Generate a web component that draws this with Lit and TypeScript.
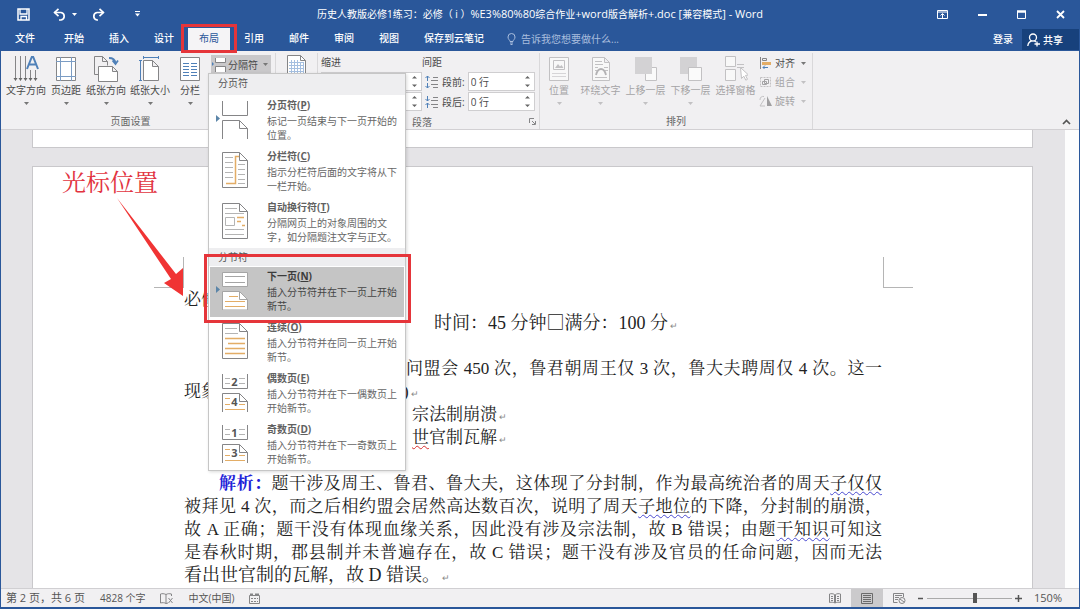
import { LitElement, html, css, svg, nothing, type TemplateResult } from "lit";
import { customElement } from "lit/decorators.js";
import { classMap } from "lit/directives/class-map.js";

const icon = (w: number, h: number, body: TemplateResult, cls = "") =>
  html`<svg class=${cls} width=${w} height=${h} viewBox="0 0 ${w} ${h}" fill="none" aria-hidden="true">${body}</svg>`;

const G = "#858587";
const L = "#c2c1c3";
const B = "#4f80b8";
const O = "#e3ad66";

const caret = (color = "#777") => icon(5, 3, svg`<path d="M0 0h5L2.5 3z" fill=${color}/>`, "caret");

const icons = {
  save: icon(13, 13, svg`<path d="M1 1h11v11H1z" stroke="#fff" stroke-width="1.5"/><path d="M3 1v5h7V1M4 12V8.500h5.500V12" stroke="#fff" stroke-width="1.300"/>`),
  undo: icon(13, 13, svg`<path d="M1.500 4.500h6.500a3.800 3.800 0 0 1 0 7.500H6" stroke="#fff" stroke-width="1.700"/><path d="M5.500 .8 1.600 4.500l3.900 3.700" stroke="#fff" stroke-width="1.700"/>`),
  redo: icon(13, 13, svg`<path d="M11.500 4.500H5a3.800 3.800 0 0 0 0 7.500h1" stroke="#fff" stroke-width="1.700"/><path d="m7.500 .8 3.900 3.700-3.900 3.700" stroke="#fff" stroke-width="1.700"/>`),
  custom: icon(5, 6, svg`<path d="M0 .5h5" stroke="#fff"/><path d="M0 2.500h5L2.500 5.500z" fill="#fff"/>`),
  display: icon(11, 9, svg`<path d="M.5 .5h10v8H.5zM.5 2h10" stroke="#fff"/><path d="M5.500 8V4M3.500 5.500l2-2 2 2" stroke="#fff"/>`),
  min: icon(9, 9, svg`<path d="M0 5h9" stroke="#fff" stroke-width="2"/>`),
  max: icon(9, 9, svg`<path d="M.5 1.500h8v7h-8z" stroke="#fff"/><path d="M0 1.500h9" stroke="#fff" stroke-width="2.500"/>`),
  close: icon(9, 9, svg`<path d="m1 1 7 7M8 1 1 8" stroke="#fff" stroke-width="1.800"/>`),
  bulb: icon(9, 12, svg`<path d="M3 8.500C3 7 1 6.500 1 4a3.500 3.500 0 0 1 7 0c0 2.500-2 3-2 4.500zM3 10h3M3.500 11.500h2" stroke="#a9bede"/>`),
  person: icon(13, 14, svg`<circle cx="6" cy="4.500" r="3.500" stroke="#fff" stroke-width="1.300"/><path d="M.8 13c.3-3 2-4.500 3.800-5M7.500 8l1.500 1M10 8.500v5M7.500 11H13" stroke="#fff" stroke-width="1.300"/>`),
  direction: icon(28, 28, svg`<path d="M3.500 1v23M8.500 1v23M13.500 1v23M18.500 15v9M23.500 15v9" stroke=${G}/><path d="M1.500 23h4l-2 3zM6.500 23h4l-2 3zM11.500 23h4l-2 3zM16.500 23h4l-2 3zM21.500 23h4l-2 3z" fill="#666"/><path d="m15 14 4.800-12h1.400L26 14M16.800 9.500h7.400" stroke=${B} stroke-width="2"/>`),
  margins: icon(20, 26, svg`<path d="M.5 1.500h19v23H.5z" stroke=${G} fill="#fff"/><path d="M4.500 1v24M15.500 1v24M0 5.500h20M0 20.500h20" stroke="#7b9cc4"/>`),
  orient: icon(26, 26, svg`<path d="M1.500 18.500V.5h8l5 5v4M9.500 .5v5h5M1.500 18.500h4" stroke=${G}/><path d="M5.500 25.500v-15h14l5 5v10zM19.500 10.500v5h5" stroke=${G} fill="#fff"/><path d="M16 2c4 0 6 1.500 6.500 5M19.500 4.500l3 3.500 2.500-3.500" stroke=${B} stroke-width="1.800"/>`),
  size: icon(22, 26, svg`<path d="M4.500 24.500v-20h9l6 6v14zM13.500 4.500v6h6" stroke=${G} fill="#fff"/><path d="M4 1.500h16M4.500 0v3M19.500 0v3M1.500 4v21M0 4.500h3M0 24.500h3" stroke=${B}/>`),
  columns: icon(20, 26, svg`<path d="M.5 1.500h19v23H.5z" stroke=${G} fill="#fff"/><path d="M3 7.500h6M3 10.500h6M3 13.500h6M3 16.500h6M3 19.500h6M11 7.500h6M11 10.500h6M11 13.500h6M11 16.500h6M11 19.500h6" stroke=${B}/>`),
  breaks: icon(14, 14, svg`<path d="M3.500 0v4.500h10V0M3.500 14V8.500h10V14" stroke=${G} fill="#fff"/><path d="M0 4v4l2-2z" fill=${B}/>`),
  grid: icon(20, 24, svg`<path d="M.5 .5h13l5 5V24H.5z" stroke=${G} fill="#fff"/><path d="M13.500 .5v5h5" stroke=${G}/><path d="M2 7.500h15M2 10.500h15M2 13.500h15M2 16.500h15M2 19.500h15M4.500 5v18M7.500 5v18M10.500 5v18M13.500 7v16M16.500 7v16" stroke="#a5bfe0"/>`),
  before: icon(14, 14, svg`<path d="M2.500 1v5M.5 3l2-2 2 2M2.500 8v5M.5 11l2 2 2-2" stroke=${B}/><path d="M8 2.500h5M6 5.500h7M6 9.500h7M8 12.500h5" stroke=${G}/>`),
  after: icon(14, 14, svg`<path d="M2.500 1v5M.5 4l2 2 2-2M2.500 8v5M.5 10l2-2 2 2" stroke=${B}/><path d="M8 2.500h5M6 5.500h7M6 9.500h7M8 12.500h5" stroke=${G}/>`),
  position: icon(20, 26, svg`<path d="M.5 1.500h19v23H.5z" stroke=${L} fill="#f8f8f8"/><path d="M4.500 4.500h11v9h-11z" stroke=${L}/><path d="m6 12 3-4 2 2.500 1.500-1.500 2 3z" fill=${L}/><path d="M3 17.500h14M3 20.500h14" stroke="#d6d5d7"/>`),
  wrap: icon(20, 26, svg`<path d="M1.500 1.500h12l5 5v18h-17zM13.500 1.500v5h5" stroke=${L} fill="#f8f8f8"/><path d="M4 5.500h7M4 8.500h8M4 11.500h3M13 11.500h4M4 14.500h2M14 14.500h3M4 21.500h12" stroke=${L}/><path d="M5 19c1-4 3-6 5-6s4 2 5 6" stroke="#b3b2b4" stroke-width="1.800"/>`),
  forward: icon(22, 26, svg`<path d="M10.500 11.500h11v13h-11z" stroke=${L} fill="#fafafa"/><path d="M0 1h17v17H0z" fill="#d3d2d4"/>`),
  backward: icon(22, 26, svg`<path d="M0 1h17v17H0z" fill="#d3d2d4"/><path d="M8.500 11.500h13v13h-13z" stroke=${L} fill="#fafafa"/>`),
  select: icon(24, 26, svg`<path d="M1.500 .5h10v10h-10zM1.500 13.500h10v11h-10z" stroke=${L} fill="#f8f8f8"/><path d="M13 8.500h7M13 11.500h7" stroke=${L}/><path d="m16.500 11.500 1 11 2.300-2.300 2 4 1.700-.9-2-3.900 3-.4z" stroke=${L} fill="#fff"/>`),
  align: icon(13, 12, svg`<path d="M1.500 0v12" stroke=${G}/><path d="M3.500 1.500h4v2h-4z" stroke=${G}/><path d="M3 5h9v3H3z" fill=${O}/><path d="M9 10.500H4M6 8.500l-2 2 2 2" stroke=${B}/>`),
  group: icon(13, 12, svg`<path d="M1.500 1.500h10v9h-10z" stroke=${L} stroke-dasharray="2 1"/><path d="M3.500 5.500h4v3h-4zM5.500 3.500h4v4h-4z" stroke="#a3a2a4"/>`),
  rotate: icon(13, 12, svg`<path d="M8 1v10h5z" fill="#9f9ea0"/><path d="M6 11H1l5-8" stroke=${L}/><path d="M1 5c0-3 2-4 4-3.500" stroke=${L}/>`),
  launcher: icon(7, 7, svg`<path d="M.5 5V.5H5M3 3l3 3M6.500 3v3.500H3" stroke=${G}/>`),
  up: icon(9, 6, svg`<path d="m1 5 3.500-3.500L8 5" stroke="#555" stroke-width="1.700"/>`),
  proof: icon(13, 11, svg`<path d="M6 1.500C4 .5 2 .5.5 1v9c2-.5 4-.5 5.500.5zM6 1.500C8 .5 9 .5 11.500 1v2M6 10.500l2-.5M8.500 5l4 5M12.500 5l-4 5" stroke=${G}/>`),
  macro: icon(12, 11, svg`<path d="M.5 2.500h10v8H.5z" stroke=${G}/><path d="M1 1.500h3M6 1.500h4" stroke=${G} stroke-width="2"/><path d="M2 5.500h7M2 8.500h7" stroke=${G} stroke-dasharray="2 1"/>`),
  read: icon(12, 11, svg`<path d="M5.500 1.500C4 .5 2 .5.500 1v8.500c2-.5 3.500-.5 5 .5zM6.500 1.500c1.500-1 3.500-1 5-.5v8.500c-2-.5-3.500-.5-5 .5zM2 3.500h2M2 5.500h2M2 7.500h2M8 3.500h2M8 5.500h2M8 7.500h2" stroke=${G}/>`),
  print: icon(12, 11, svg`<path d="M.5 .5h11v10H.5zM2 2.500h8M2 4.500h8M2 6.500h8M2 8.500h8" stroke="#6b6b6b"/>`),
  web: icon(13, 11, svg`<path d="M10.500 4V.5H.5v9h4M2 2.500h7M2 4.500h4M2 6.500h3" stroke=${G}/><circle cx="9" cy="7.500" r="3" stroke=${G}/><path d="m7 6 4 3" stroke=${G}/>`),
};

const halves = (num: string | null, low: string | null) => svg`
  <path d="M.5 0v14.500h25V0M.5 38V19.500h17l8 8V38M17.500 19.500v8h8" stroke=${G} fill="#fff"/>
  ${num
    ? svg`<path d="M3 4.500h20M3 9.500h20" stroke="#b4b4b4"/><path d="M3 24.500h12M3 30.500h20M3 35.500h20" stroke=${O}/><path d="M8 2h9v11H8zM8 22h9v11H8z" fill="#fff"/>
      <text x="12.500" y="12" class="num">${num}</text><text x="12.500" y="32" class="num">${low}</text>`
    : nothing}`;
const sheet = svg`<path d="M.5 .5h17l8 8v27H.5zM17.500 .5v8h8" stroke=${G} fill="#fff"/>`;

const glyphs = {
  page: icon(26, 38, halves(null, null)),
  column: icon(26, 38, svg`${sheet}<path d="M3 5.500h8M3 10.500h8M3 15.500h8M3 20.500h8M3 25.500h8M16 12.500h7M16 17.500h7M16 22.500h7M16 27.500h7M16 31.500h7" stroke="#b4b4b4"/><path d="M4 31.500h9.500V4.500H17" stroke=${O} stroke-width="1.500"/>`),
  wrap: icon(26, 38, svg`${sheet}<path d="M3 5.500h12M3 10.500h19M3 26.500h19M3 31.500h19" stroke="#b4b4b4"/><path d="M3.500 14.500h9v8h-9z" stroke="#b4b4b4"/><path d="M15 14.500h7M15 18.500h4M20 22.500h3" stroke=${O} stroke-width="1.500"/>`),
  next: icon(26, 38, svg`<path d="M.5 .5h25v14H.5zM.5 38V19.500h17l8 8V38z" stroke="#a5a5a5" fill="#fff"/><path d="M17.500 19.500v8h8M3 4.500h20M3 10.500h20" stroke="#a5a5a5"/><path d="M7 24.500h9M3 29.500h20M3 34.500h20" stroke=${O}/>`),
  cont: icon(26, 38, svg`${sheet}<path d="M3 5.500h12M3 10.500h13" stroke="#b4b4b4"/><path d="M3 15.500h20M6 20.500h17M3 25.500h20M3 30.500h20" stroke=${O} stroke-width="1.300"/>`),
  even: icon(26, 38, halves("2", "4")),
  odd: icon(26, 38, halves("1", "3")),
};

interface BreakItem { name: string; key: string; text: string; glyph: TemplateResult; mark?: boolean; hot?: boolean }
const pageBreaks: BreakItem[] = [
  { name: "分页符", key: "P", text: "标记一页结束与下一页开始的位置。", glyph: glyphs.page, mark: true },
  { name: "分栏符", key: "C", text: "指示分栏符后面的文字将从下一栏开始。", glyph: glyphs.column },
  { name: "自动换行符", key: "T", text: "分隔网页上的对象周围的文字，如分隔题注文字与正文。", glyph: glyphs.wrap },
];
const sectionBreaks: BreakItem[] = [
  { name: "下一页", key: "N", text: "插入分节符并在下一页上开始新节。", glyph: glyphs.next, mark: true, hot: true },
  { name: "连续", key: "O", text: "插入分节符并在同一页上开始新节。", glyph: glyphs.cont },
  { name: "偶数页", key: "E", text: "插入分节符并在下一偶数页上开始新节。", glyph: glyphs.even },
  { name: "奇数页", key: "D", text: "插入分节符并在下一奇数页上开始新节。", glyph: glyphs.odd },
];

const base = css`
  * { box-sizing: border-box; }
  button { font: inherit; color: inherit; background: none; border: 0; margin: 0; padding: 0; }
  svg { display: block; flex: none; }
`;

@customElement("break-menu")
class BreakMenu extends LitElement {
  static styles = [base, css`
    :host { display: block; background: #fff; border: 1px solid #c6c6c6; box-shadow: 1px 1px 3px rgba(0, 0, 0, .15); color: #666; white-space: normal; }
    .head { height: 21px; line-height: 19px; padding-left: 9px; background: #eeeef0; color: #555; }
    .head.second { height: 18px; line-height: 18px; }
    .item { position: relative; display: flex; width: 100%; height: 51px; padding: 1px 3px 0 13px; text-align: left; align-items: flex-start; }
    .item.hot { background: #c5c5c5; background-clip: content-box; padding: 1px 1px 0; color: #444; }
    .item.hot .glyph { margin-left: 12px; }
    .glyph { width: 45px; padding-top: 5px; flex: none; }
    .name { display: block; line-height: 18px; font-weight: 700; color: #606060; }
    .hot .name { color: #3c3c3c; }
    .desc { display: block; line-height: 14px; width: 134px; }
    .mark { position: absolute; left: 7px; top: 20px; }
    .num { font: 700 11px "Open Sans", sans-serif; fill: #555; text-anchor: middle; }
    .frame { position: absolute; inset: -12px -6px -6px -5px; border: 3px solid #e5353a; z-index: 2; pointer-events: none; }
  `];
  private row(i: BreakItem) {
    return html`<button class=${classMap({ item: true, hot: !!i.hot })} role="menuitem">
      ${i.mark ? icon(4, 7, svg`<path d="M0 0v7l4-3.500z" fill="#5b85a8"/>`, "mark") : nothing}
      <span class="glyph">${i.glyph}</span>
      <span class="text"><span class="name">${i.name}(<u>${i.key}</u>)</span><span class="desc">${i.text}</span></span>
      ${i.hot ? html`<span class="frame"></span>` : nothing}
    </button>`;
  }
  render() {
    return html`<div role="menu">
      <div class="head">分页符</div>${pageBreaks.map((i) => this.row(i))}
      <div class="head second">分节符</div>${sectionBreaks.map((i) => this.row(i))}
    </div>`;
  }
}

@customElement("word-ribbon")
class WordRibbon extends LitElement {
  static styles = [base, css`
    :host { display: flex; height: 79px; background: #f1f0f2; border-bottom: 1px solid #d2d0d3; color: #4a4a4a; line-height: 14px; position: relative; z-index: 3; white-space: nowrap; }
    .group { display: flex; flex-direction: column; border-right: 1px solid #d9d8da; padding-top: 2px; margin-top: 2px; }
    .setup { width: 275px; padding-left: 3px; }
    .draft { width: 42px; align-items: center; }
    .para { width: 222px; padding-left: 3px; }
    .arrange { width: 273px; }
    .row { display: flex; flex: 1; }
    .name { line-height: 14px; height: 15px; text-align: center; color: #666; }
    .setup .name { padding-right: 18px; }
    .para .name { display: flex; justify-content: space-between; align-items: center; padding: 0 3px 0 91px; }
    .big { display: flex; flex-direction: column; align-items: center; width: 44px; height: 54px; }
    .big .label { margin-top: 1px; }
    .big .art { height: 27px; display: flex; align-items: center; }
    .big .caret { margin-top: 5px; }
    .big.narrow { width: 36px; }
    .arrange .big { width: 45px; }
    .arrange .narrow { width: 38px; }
    .off { color: #a5a4a6; }
    .anchor { position: relative; margin-left: 3px; height: 20px; }
    .breaks { display: flex; align-items: center; gap: 2px; width: 60px; height: 19px; background: #c9c8ca; padding-left: 1px; }
    .breaks .caret, .small .caret { margin-left: 3px; }
    break-menu { position: absolute; left: -3px; top: 18px; width: 198px; }
    .fields { display: grid; grid-template-columns: 101px 116px; row-gap: 1px; align-content: start; }
    .title { line-height: 15px; height: 16px; }
    .field { display: flex; align-items: center; height: 19px; gap: 3px; }
    .labelled { padding: 0 3px; }
    .box { display: flex; flex: 1; align-items: center; background: #fff; border: 1px solid #cfced0; height: 19px; min-width: 0; padding-right: 4px; }
    .box input { font: inherit; color: inherit; border: 0; background: none; outline: 0; padding: 0 0 0 2px; width: 0; flex: 1; min-width: 0; }
    .side { display: flex; flex-direction: column; gap: 5px; padding: 1px 0 0 1px; }
    .small { display: flex; align-items: center; height: 14px; gap: 3px; }
    .collapse { margin: auto 8px 4px auto; }
  `];
  private big(label: string, art: TemplateResult, opt: { off?: boolean; narrow?: boolean; flat?: boolean } = {}) {
    return html`<button class=${classMap({ big: true, off: !!opt.off, narrow: !!opt.narrow })}>
      <span class="art">${art}</span><span class="label">${label}</span>${opt.flat ? nothing : caret(opt.off ? L : "#777")}
    </button>`;
  }
  private spin() {
    return icon(5, 11, svg`<path d="M0 2.500h5L2.500 0zM0 8.500h5L2.500 11z" fill="#666"/>`);
  }
  render() {
    return html`
      <section class="group setup">
        <div class="row">
          ${this.big("文字方向", icons.direction)}${this.big("页边距", icons.margins, { narrow: true })}
          ${this.big("纸张方向", icons.orient)}${this.big("纸张大小", icons.size)}${this.big("分栏", icons.columns, { narrow: true })}
          <div class="anchor">
            <button class="breaks" aria-haspopup="menu" aria-expanded="true">${icons.breaks}分隔符${caret()}</button>
            <break-menu></break-menu>
          </div>
        </div>
        <div class="name">页面设置</div>
      </section>
      <section class="group draft">${icons.grid}</section>
      <section class="group para">
        <div class="row"><div class="fields">
          <span class="title">缩进</span><span class="title">间距</span>
          <div class="field"><span class="box"><input aria-label="左缩进">${this.spin()}</span></div>
          <div class="field labelled">${icons.before}<label for="before">段前:</label><span class="box"><input id="before" value="0 行">${this.spin()}</span></div>
          <div class="field"><span class="box"><input aria-label="右缩进">${this.spin()}</span></div>
          <div class="field labelled">${icons.after}<label for="after">段后:</label><span class="box"><input id="after" value="0 行">${this.spin()}</span></div>
        </div></div>
        <div class="name">段落<button aria-label="段落设置">${icons.launcher}</button></div>
      </section>
      <section class="group arrange">
        <div class="row">
          ${this.big("位置", icons.position, { off: true, narrow: true })}${this.big("环绕文字", icons.wrap, { off: true })}
          ${this.big("上移一层", icons.forward, { off: true })}${this.big("下移一层", icons.backward, { off: true })}
          ${this.big("选择窗格", icons.select, { off: true, flat: true })}
          <div class="side">
            <button class="small">${icons.align}对齐${caret()}</button>
            <button class="small off">${icons.group}组合${caret(L)}</button>
            <button class="small off">${icons.rotate}旋转${caret(L)}</button>
          </div>
        </div>
        <div class="name">排列</div>
      </section>
      <button class="collapse" aria-label="折叠功能区">${icons.up}</button>`;
  }
}

@customElement("word-document")
class WordDocument extends LitElement {
  static styles = [base, css`
    :host { display: flex; min-height: 0; overflow: hidden; background: #e5e4e7; }
    .canvas { flex: 1; min-width: 0; padding: 0 32px 0 31px; }
    .prev { height: 18px; background: #fff; border: 1px solid #c9c8cb; border-top: 0; }
    .page { position: relative; margin-top: 18px; height: 600px; background: #fff; border: 1px solid #c9c8cb; padding: 121px 150px 0 151px;
      font: 17px/23px "Liberation Serif", "Noto Serif CJK SC", "Noto Sans CJK SC", serif; color: #222; }
    .bar { width: 14px; background: #fdfdfd; }
    p { margin: 0; height: 23px; white-space: nowrap; }
    .full { text-align: justify; text-align-last: justify; white-space: normal; }
    .center { text-align: center; padding-left: 46px; }
    .large { font-size: 18px; }
    .square { font-family: "Noto Sans CJK SC", sans-serif; line-height: 20px; }
    .tail { padding-left: 222px; }
    .split { display: grid; grid-template-columns: 219px 1fr; }
    .option { padding-left: 228px; }
    .first { padding-left: 35px; }
    b { color: #2222d8; }
    i { font: 9px "Noto Sans CJK SC", sans-serif; color: #888; margin-left: 2px; }
    .g { text-decoration: underline wavy #4a4ad0 1px; text-underline-offset: 2px; }
    .r { text-decoration: underline wavy #d83030 1px; text-underline-offset: 2px; }
    .corner { position: absolute; top: 90px; width: 30px; height: 31px; border: 0 solid #b5b5b5; border-bottom-width: 1px; }
    .tl { left: 121px; border-right-width: 1px; }
    .tr { right: 119px; border-left-width: 1px; }
    .note { position: absolute; left: 29px; top: 1px; font-size: 24px; line-height: 30px; color: #e2343f; }
    .arrow { position: absolute; left: 83px; top: 30px; }
  `];
  render() {
    const ret = html`<i>↵</i>`;
    return html`
      <div class="canvas">
        <div class="prev"></div>
        <article class="page">
          <span class="corner tl"></span><span class="corner tr"></span>
          <p>必修</p>
          <p class="center large">时间：45 分钟<span class="square">□</span>满分：100 分${ret}</p>
          <p></p>
          <p class="full tail">问盟会 450 次，鲁君朝周王仅 3 次，鲁大夫聘周仅 4 次。这一</p>
          <p class="split"><span>现象</span><span>)${ret}</span></p>
          <p class="option">宗法制崩溃${ret}</p>
          <p class="option"><span class="r">世</span>官制瓦解${ret}</p>
          <p></p>
          <p class="full first"><b>解析：</b>题干涉及周王、鲁君、鲁大夫，这体现了分封制，作为最高统治者的周天<span class="g">子仅仅</span></p>
          <p class="full">被拜见 4 次，而之后相约盟会居然高达数百次，说明了周天<span class="g">子地位</span>的下降，分封制的崩溃，</p>
          <p class="full">故 A 正确；题干没有体现血缘关系，因此没有涉及宗法制，故 B 错误；由题<span class="g">干知识</span>可知这</p>
          <p class="full">是春秋时期，郡县制并未普遍存在，故 C 错误；题干没有涉及官员的任命问题，因而无法</p>
          <p class="large">看出世官制的瓦解，故 D 错误。${ret}</p>
          <span class="note">光标位置</span>
          ${icon(70, 102, svg`<path d="M1 1 60 77l7-6v28L48 86l7-4z" fill="#f03434"/>`, "arrow")}
        </article>
      </div>
      <div class="bar"></div>`;
  }
}

@customElement("app-root")
class AppRoot extends LitElement {
  static styles = [base, css`
    :host { display: flex; flex-direction: column; box-sizing: border-box; height: 100vh; overflow: hidden; border: 1px solid #2a579a; border-top: 0; border-bottom-width: 2px;
      font: 10px/14px "Open Sans", "Noto Sans CJK SC", sans-serif; background: #f1f0f2; }
    header { background: #2a579a; color: #fff; flex: none; }
    .title { display: grid; grid-template-columns: 1fr auto 1fr; align-items: center; height: 27px; padding-top: 1px; }
    .quick { display: flex; align-items: center; padding-left: 16px; }
    .quick button + button { margin-left: 23px; }
    .quick .more + button, .quick .more { margin-left: 6px; }
    .quick .more + button { margin-left: 15px; }
    .quick .last { margin-left: 30px; }
    .doc { white-space: nowrap; }
    .latin { font-size: 11px; }
    .window { display: flex; justify-content: flex-end; align-items: center; gap: 30px; padding-right: 14px; }
    nav { display: flex; align-items: stretch; height: 24px; padding-left: 3px; }
    .tab { position: relative; padding: 0 11px; margin-right: 3px; font-weight: 500; color: #fff; text-decoration: none; line-height: 23px; white-space: nowrap; }
    .tab.file { margin-right: 7px; }
    .tab.on { background: #f5f4f6; color: #2a579a; margin-top: 1px; line-height: 21px; font-weight: 400; }
    .frame { position: absolute; inset: -4px -7px -2px; border: 3px solid #e5353a; z-index: 5; pointer-events: none; }
    .tell { display: flex; align-items: center; gap: 5px; margin-left: 9px; color: #a9bede; }
    .tell input { font: inherit; background: none; border: 0; padding: 0; width: 150px; color: inherit; }
    .tell input::placeholder { color: #a9bede; opacity: 1; }
    .login { margin-left: auto; margin-right: 9px; font-weight: 500; }
    .share { display: flex; align-items: center; gap: 3px; width: 57px; padding-left: 5px; background: #17417c; font-weight: 500; margin: 2px 0 1px; }
    word-ribbon { flex: none; }
    word-document { flex: 1; }
    footer { display: flex; align-items: center; height: 19px; flex: none; padding: 0 17px 0 5px; border-top: 1px solid #d0cfd2; color: #555; white-space: nowrap; }
    .pages, .pct { font-size: 11px; }
    .gap { margin-left: 15px; }
    .views { display: flex; margin-left: auto; align-self: stretch; }
    .views button { width: 32px; display: flex; align-items: center; justify-content: center; }
    .views .on { background: #cbcacc; }
    .zoom { display: flex; align-items: center; gap: 3px; margin-left: 2px; }
    .zoom input { appearance: none; width: 85px; height: 10px; margin: 0; background: linear-gradient(#aaa, #aaa) center / 100% 1px no-repeat; }
    .zoom input::-webkit-slider-thumb { appearance: none; width: 4px; height: 10px; background: #555; }
    .pct { margin-left: 12px; }
  `];
  render() {
    const tabs = ["文件", "开始", "插入", "设计", "布局", "引用", "邮件", "审阅", "视图", "保存到云笔记"];
    return html`
      <header>
        <div class="title">
          <div class="quick">
            <button aria-label="保存">${icons.save}</button><button aria-label="撤消">${icons.undo}</button>
            <button class="more" aria-label="撤消列表">${caret("#fff")}</button><button aria-label="恢复">${icons.redo}</button>
            <button class="last" aria-label="自定义">${icons.custom}</button>
          </div>
          <div class="doc">历史人教版必修1练习：必修（ i ）<span class="latin">%E3%80%80</span>综合作业<span class="latin">+word</span>版含解析<span class="latin">+.doc [</span>兼容模式<span class="latin">] - Word</span></div>
          <div class="window">
            <button aria-label="功能区显示选项">${icons.display}</button><button aria-label="最小化">${icons.min}</button>
            <button aria-label="最大化">${icons.max}</button><button aria-label="关闭">${icons.close}</button>
          </div>
        </div>
        <nav>
          ${tabs.map((t, i) => html`<a href="#" class=${classMap({ tab: true, file: i === 0, on: t === "布局" })}>${t}${t === "布局" ? html`<span class="frame"></span>` : nothing}</a>`)}
          <label class="tell">${icons.bulb}<input aria-label="操作说明搜索" placeholder="告诉我您想要做什么..."></label>
          <button class="login">登录</button>
          <button class="share">${icons.person}共享</button>
        </nav>
      </header>
      <word-ribbon></word-ribbon>
      <word-document></word-document>
      <footer>
        <span class="pages">第 2 页，共 6 页</span><span class="gap">4828 个字</span>
        <span class="gap">${icons.proof}</span><span class="gap">中文(中国)</span><span class="gap">${icons.macro}</span>
        <div class="views">
          <button aria-label="阅读视图">${icons.read}</button><button class="on" aria-label="页面视图">${icons.print}</button>
          <button aria-label="Web 版式视图">${icons.web}</button>
        </div>
        <div class="zoom">
          <button aria-label="缩小">${icon(7, 7, svg`<path d="M1 3.500h5" stroke="#555" stroke-width="1.500"/>`)}</button>
          <input type="range" min="0" max="100" value="57" aria-label="显示比例">
          <button aria-label="放大">${icon(7, 7, svg`<path d="M0 3.500h7M3.500 0v7" stroke="#555" stroke-width="1.500"/>`)}</button>
        </div>
        <span class="pct">150%</span>
      </footer>`;
  }
}
